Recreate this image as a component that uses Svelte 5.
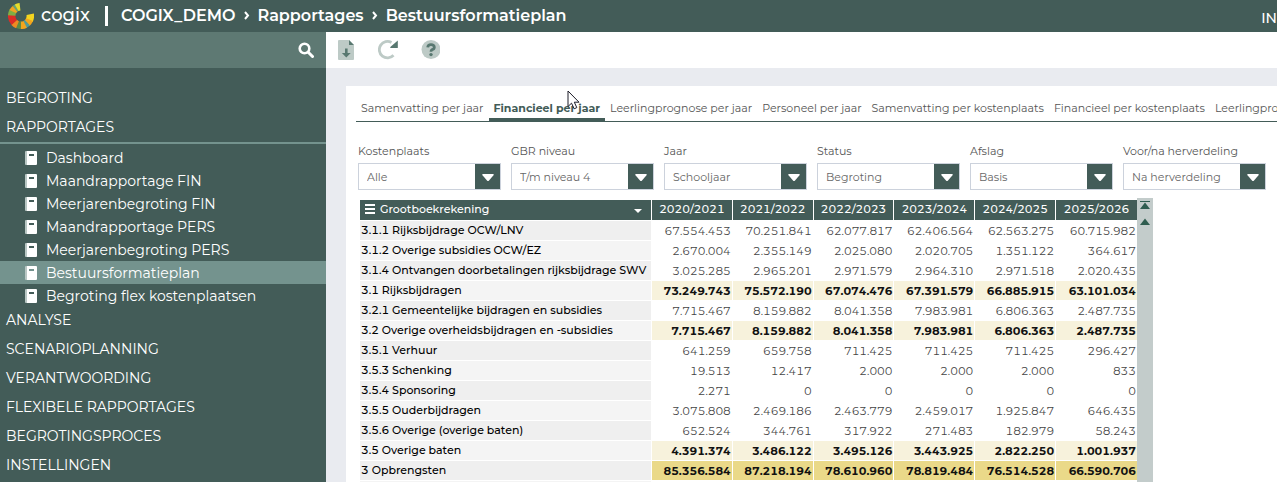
<script>
  const menuTop = ['BEGROTING', 'RAPPORTAGES'];
  const reports = ['Dashboard', 'Maandrapportage FIN', 'Meerjarenbegroting FIN', 'Maandrapportage PERS', 'Meerjarenbegroting PERS', 'Bestuursformatieplan', 'Begroting flex kostenplaatsen'];
  const menuBottom = ['ANALYSE', 'SCENARIOPLANNING', 'VERANTWOORDING', 'FLEXIBELE RAPPORTAGES', 'BEGROTINGSPROCES', 'INSTELLINGEN'];
  const tabs = ['Samenvatting per jaar', 'Financieel per jaar', 'Leerlingprognose per jaar', 'Personeel per jaar', 'Samenvatting per kostenplaats', 'Financieel per kostenplaats', 'Leerlingprognose per kostenplaats'];
  const filters = [
    ['Kostenplaats', 'Alle'],
    ['GBR niveau', 'T/m niveau 4'],
    ['Jaar', 'Schooljaar'],
    ['Status', 'Begroting'],
    ['Afslag', 'Basis'],
    ['Voor/na herverdeling', 'Na herverdeling']
  ];
  const years = ['2020/2021', '2021/2022', '2022/2023', '2023/2024', '2024/2025', '2025/2026'];
  const rows = [
    ['3.1.1 Rijksbijdrage OCW/LNV', '', '67.554.453 70.251.841 62.077.817 62.406.564 62.563.275 60.715.982'],
    ['3.1.2 Overige subsidies OCW/EZ', '', '2.670.004 2.355.149 2.025.080 2.020.705 1.351.122 364.617'],
    ['3.1.4 Ontvangen doorbetalingen rijksbijdrage SWV', '', '3.025.285 2.965.201 2.971.579 2.964.310 2.971.518 2.020.435'],
    ['3.1 Rijksbijdragen', 'sub', '73.249.743 75.572.190 67.074.476 67.391.579 66.885.915 63.101.034'],
    ['3.2.1 Gemeentelijke bijdragen en subsidies', '', '7.715.467 8.159.882 8.041.358 7.983.981 6.806.363 2.487.735'],
    ['3.2 Overige overheidsbijdragen en -subsidies', 'sub', '7.715.467 8.159.882 8.041.358 7.983.981 6.806.363 2.487.735'],
    ['3.5.1 Verhuur', '', '641.259 659.758 711.425 711.425 711.425 296.427'],
    ['3.5.3 Schenking', '', '19.513 12.417 2.000 2.000 2.000 833'],
    ['3.5.4 Sponsoring', '', '2.271 0 0 0 0 0'],
    ['3.5.5 Ouderbijdragen', '', '3.075.808 2.469.186 2.463.779 2.459.017 1.925.847 646.435'],
    ['3.5.6 Overige (overige baten)', '', '652.524 344.761 317.922 271.483 182.979 58.243'],
    ['3.5 Overige baten', 'sub', '4.391.374 3.486.122 3.495.126 3.443.925 2.822.250 1.001.937'],
    ['3 Opbrengsten', 'total', '85.356.584 87.218.194 78.610.960 78.819.484 76.514.528 66.590.706'],
    ['', '', '     ']
  ];
</script>

<div class="app">
  <header>
    <svg class="logo" viewBox="0 0 26 26" aria-hidden="true">
      <g fill="none" stroke-width="7.500">
        <path stroke="#f4d51f" d="M22.200 11.300A9.300 9.300 0 0 1 21.200 17.500" />
        <path stroke="#f2a51e" d="M21.500 16.700A9.300 9.300 0 0 1 19 20.200" />
        <path stroke="#4f9b9a" d="M19.400 19.800A9.300 9.300 0 0 1 16.800 21.500" />
        <path stroke="#f2a51e" d="M17.200 21.300A9.300 9.300 0 0 1 12.400 22.300" />
        <path stroke="#5d8a43" d="M12.900 22.300A9.300 9.300 0 0 1 9 21.400" />
        <path stroke="#ef8a22" d="M9.500 21.700A9.300 9.300 0 0 1 6 19.200" />
        <path stroke="#dd2c26" d="M6.300 19.500A9.300 9.300 0 0 1 3.800 11.900" />
        <path stroke="#7fae45" d="M3.700 12.500A9.300 9.300 0 0 1 5 8.200" />
        <path stroke="#f0a422" d="M4.800 8.700A9.300 9.300 0 0 1 7.300 5.600" />
        <path stroke="#6aa36f" d="M7 5.900A9.300 9.300 0 0 1 9 4.600" />
        <path stroke="#e6dc2a" d="M8.600 4.800A9.300 9.300 0 0 1 12 3.700" />
      </g>
    </svg>
    <span class="brand">cogix</span>
    <span class="bar"></span>
    <nav class="crumbs" aria-label="Kruimelpad">
      <a href="#demo">COGIX_DEMO</a>
      <svg viewBox="0 0 6 10"><path d="M1 2l3 3.500L1 9" /></svg>
      <a href="#rapportages">Rapportages</a>
      <svg viewBox="0 0 6 10"><path d="M1 2l3 3.500L1 9" /></svg>
      <a href="#plan">Bestuursformatieplan</a>
    </nav>
    <span class="user">IN</span>
  </header>

  <div class="body">
    <aside>
      <div class="search">
        <button aria-label="Zoeken">
          <svg viewBox="0 0 16 16"><circle cx="6.500" cy="6.500" r="4.800" fill="none" stroke="#fff" stroke-width="2.600" /><path d="M10 10l4.500 4.500" stroke="#fff" stroke-width="3" stroke-linecap="round" /></svg>
        </button>
      </div>
      <nav class="menu" aria-label="Menu">
        {#each menuTop as m}<a class="head" href="#menu">{m}</a>{/each}
        <div class="reports">
          {#each reports as r}
            <a class:current={r === 'Bestuursformatieplan'} href="#rapport">
              <svg viewBox="0 0 12 14"><path fill="#b9c7c4" d="M1 0h2v14H1q-1 0-1-1V1q0-1 1-1z" /><path fill="#fff" fill-rule="evenodd" d="M2 0H11q1 0 1 1v12q0 1-1 1H2zM4 3v2h5V3z" /></svg>
              {r}
            </a>
          {/each}
        </div>
        {#each menuBottom as m}<a class="head" href="#menu">{m}</a>{/each}
      </nav>
    </aside>

    <main>
      <div class="toolbar">
        <button aria-label="Downloaden">
          <svg viewBox="0 0 20 22"><path fill="#bdcac6" d="M3 1H13l5 5v14q0 1-1 1H3q-1 0-1-1V2q0-1 1-1z" /><path fill="#587870" d="M13 1l5 5h-5zM9 9.500h2.600V14h3.100l-4.400 4.500L5.900 14H9z" /></svg>
        </button>
        <button aria-label="Vernieuwen">
          <svg viewBox="0 0 20 22"><path fill="none" stroke="#bdcac6" stroke-width="2.800" d="M13.500 3.500A8.200 8.200 0 1 0 15.500 16.300" /><path fill="#587870" d="M19.800 1.500v7.500h-7.500v-1z" /></svg>
        </button>
        <button aria-label="Help">
          <svg viewBox="0 0 20 22"><circle cx="11" cy="10.500" r="9.500" fill="#bdcac6" /><path fill="none" stroke="#587870" stroke-width="2.800" d="M7.700 8.300Q8 5.700 11 5.700t3.300 2.500Q14.300 10 12 10.700 11 11.200 11 12.700" /><circle cx="11" cy="15.600" r="1.700" fill="#587870" /></svg>
        </button>
      </div>

      <section class="panel">
        <div class="tabs" role="tablist">
          {#each tabs as t, i}<button role="tab" aria-selected={i === 1} class:active={i === 1}>{t}</button>{/each}
        </div>
        <svg class="cursor" viewBox="0 0 13 20" aria-hidden="true"><path fill="#fff" stroke="#1c1c28" d="M1 1v15.500l3.500-3.300 2.700 5.600 2.600-1.200-2.500-5.400H12z" /></svg>

        <div class="filters">
          {#each filters as [label, value], i}
            <div class="filter">
              <label for="f{i}">{label}</label>
              <div class="pick">
                <select id="f{i}"><option>{value}</option></select>
                <span class="drop"><svg viewBox="0 0 12 8"><path fill="#fff" d="M1 0h10q1.500 0 .5 1.300L7 6.500q-1 1-2 0L.5 1.300Q-.5 0 1 0z" /></svg></span>
              </div>
            </div>
          {/each}
        </div>

        <div class="grid">
          <table>
            <thead>
              <tr>
                <th class="name">
                  <div>
                    <svg class="lines" viewBox="0 0 10 10"><path stroke="#fff" stroke-width="2" d="M0 1h10M0 5h10M0 9h10" /></svg>
                    <span>Grootboekrekening</span>
                    <svg class="caret" viewBox="0 0 8 4"><path fill="#fff" d="M0 0h8L4 4z" /></svg>
                  </div>
                </th>
                {#each years as y}<th>{y}</th>{/each}
              </tr>
            </thead>
            <tbody>
              {#each rows as [name, kind, values]}
                <tr class={kind}>
                  <th scope="row">{name}</th>
                  {#each values.split(' ') as v}<td>{v}</td>{/each}
                </tr>
              {/each}
            </tbody>
          </table>
          <div class="scroll">
            <button aria-label="Naar begin"><svg viewBox="0 0 10 8"><path fill="#2f5d50" d="M0 0h10v1H0zM5 1.500L10 8H0z" /></svg></button>
            <button aria-label="Omhoog"><svg viewBox="0 0 10 8"><path fill="#2f5d50" d="M5 1.500L10 8H0z" /></svg></button>
          </div>
        </div>
      </section>
    </main>
  </div>
</div>

<style>
  :global(body) { margin: 0; overflow: hidden; }
  * { box-sizing: border-box; }
  .app { height: 100vh; display: flex; flex-direction: column; overflow: hidden; font-family: Montserrat, Inter, sans-serif; font-size: 11px; background: #e9ebf0; }
  svg { display: block; flex: none; }
  a { color: inherit; text-decoration: none; }
  button { border: 0; padding: 0; background: none; font: inherit; color: inherit; }
  header { flex: none; height: 32px; display: flex; align-items: center; background: #435c58; color: #fff; padding-left: 8px; overflow: hidden; white-space: nowrap; }
  .logo { width: 26px; height: 26px; }
  .brand { width: 64px; padding-left: 7px; font-size: 18px; font-weight: 500; line-height: 22px; padding-bottom: 2px; }
  .brand, .user { flex: none; }
  .bar { width: 3px; height: 20px; margin: 0 13px 0 7px; background: #fff; }
  .crumbs { display: flex; align-items: center; gap: 8px; padding-bottom: 2px; font-size: 16px; font-weight: 600; }
  .crumbs svg { width: 6px; height: 10px; fill: none; stroke: #fff; stroke-width: 2; }
  .user { margin-left: auto; padding-top: 3px; font-size: 14px; font-weight: 500; }
  .body { flex: 1; min-height: 0; display: flex; }
  aside { flex: none; width: 326px; background: #435c58; color: #fff; overflow: hidden; }
  .search { height: 36px; background: #5e7973; display: flex; align-items: center; justify-content: flex-end; padding-right: 12px; }
  .search svg { width: 16px; height: 16px; }
  .menu { padding-top: 15px; font-size: 14px; }
  .menu a { display: flex; align-items: center; }
  .head { height: 29px; padding-left: 6px; }
  .reports { border-top: 2px solid #74938e; margin-top: 1px; padding-top: 2px; margin-bottom: -2px; }
  .reports a { height: 23px; padding-left: 25px; gap: 9px; line-height: 20px; }
  .reports svg { width: 12px; height: 14px; }
  .reports .current { background: #74938e; }
  main { flex: 1; min-width: 0; display: flex; flex-direction: column; }
  .toolbar { flex: none; height: 36px; background: #fff; display: flex; align-items: center; gap: 22px; padding-left: 10px; }
  .toolbar svg { width: 20px; height: 22px; }
  .panel { position: relative; flex: 1; min-height: 0; margin: 18px 0 0 20px; padding: 10px 0 0 10px; background: #fff; overflow: hidden; }
  .tabs { display: flex; height: 26px; border-bottom: 1px solid #435c58; color: #555; overflow: hidden; }
  .tabs button { flex: none; padding: 2px 5px 0; border-bottom: 3px solid transparent; white-space: nowrap; }
  .tabs .active { font-weight: 700; color: #435c58; border-color: #435c58; }
  .cursor { position: absolute; left: 221px; top: 4px; width: 13px; height: 20px; }
  .filters { display: flex; gap: 10px; padding: 20px 0 10px 2px; color: #555; }
  .filter { flex: none; width: 143px; }
  label { display: block; line-height: 18px; padding-bottom: 3px; }
  .pick { display: flex; height: 27px; border: 1px solid #ccd2dc; }
  select { flex: 1; min-width: 0; appearance: none; border: 0; border-radius: 0; padding: 0 0 0 8px; font: inherit; color: #666; background: #fff; }
  .drop { width: 25px; display: grid; place-items: center; padding-top: 2px; background: #435c58; pointer-events: none; }
  .drop svg { width: 12px; height: 8px; }
  .grid { display: flex; align-items: stretch; padding-left: 4px; }
  table { table-layout: fixed; width: 777px; border-collapse: separate; border-spacing: 0; font-variant-numeric: tabular-nums; }
  th, td { height: 20px; line-height: 18px; border-right: 1px solid #fff; border-bottom: 1px solid #fff; white-space: nowrap; overflow: hidden; }
  th:last-child, td:last-child { border-right: 0; }
  thead th { height: 21px; padding: 0 0 2px; background: #435c58; color: #fff; font-weight: 500; }
  thead .name { width: 292px; padding: 0 9px 2px 5px; text-align: left; }
  .name div { display: flex; align-items: center; gap: 5px; }
  .name span { flex: 1; }
  .lines { width: 10px; height: 10px; }
  .caret { width: 8px; height: 4px; margin-top: 4px; }
  tbody th { text-align: left; font-weight: 500; background: #f4f4f4; color: #000; padding: 0 0 1px 1px; }
  tbody tr:nth-child(odd) th { background: #efefef; }
  tbody td { padding: 0 1px 0 0; text-align: right; color: #444; background: #fff; }
  tbody .sub td { background: #f7f2dc; color: #111; font-weight: 700; }
  tbody .total td { background: #ead989; color: #111; font-weight: 700; }
  .scroll { width: 16px; margin-top: -2px; padding-top: 3px; background: #c3cccb; display: flex; flex-direction: column; align-items: center; gap: 8px; }
  .scroll svg { width: 10px; height: 8px; }
</style>
